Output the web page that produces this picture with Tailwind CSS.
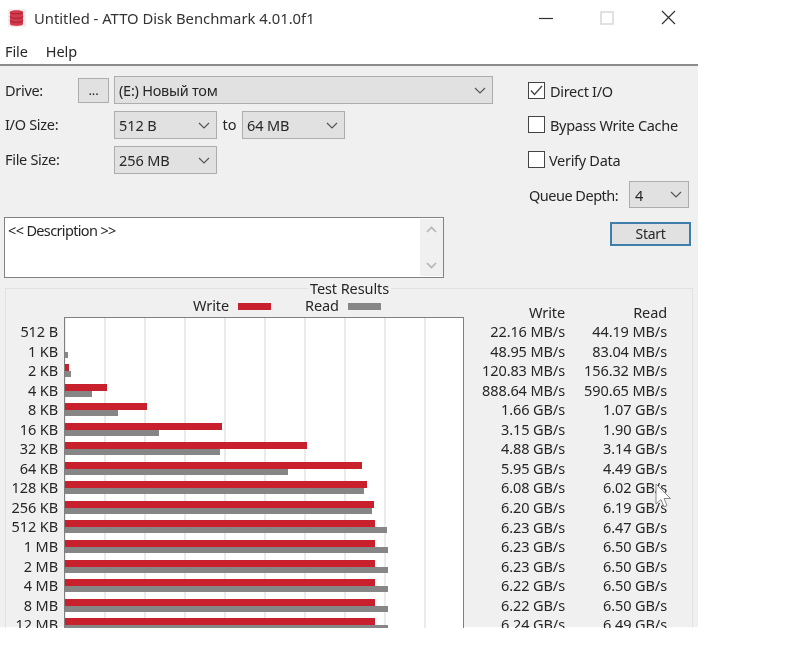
<!DOCTYPE html>
<html lang="en">
<head>
<meta charset="UTF-8">
<title>Untitled - ATTO Disk Benchmark 4.01.0f1</title>
<script src="https://cdn.jsdelivr.net/npm/@tailwindcss/browser@4"></script>
</head>
<body class="bg-white">
<div class="relative w-[698px] h-[628px] overflow-hidden bg-white text-[14.5px] leading-[20px] tracking-[-0.1px] text-[#262626] font-['Noto_Sans','Liberation_Sans',sans-serif] blur-[0.4px]">

  <!-- title bar -->
  <div class="flex items-center h-[35px] pl-[8px]">
    <svg width="18" height="18" viewBox="0 0 18 18"><rect width="18" height="18" fill="#f3eded"/><path d="M2 3C2 0.5 15 0.5 15 3V15C15 17.5 2 17.5 2 15Z" fill="#d8384c"/><path d="M2 3C2 5.5 15 5.5 15 3M2 7.5C2 10 15 10 15 7.5M2 11.5C2 14 15 14 15 11.5" fill="none" stroke="#94293a" stroke-width="1"/></svg>
    <span class="ml-[8px] text-[14.8px] tracking-normal text-[#333]">Untitled - ATTO Disk Benchmark 4.01.0f1</span>
    <div class="ml-auto flex items-center">
      <svg width="14" height="14" viewBox="0 0 14 14" class="mr-[47px]"><path d="M0 7.5H14" stroke="#333" stroke-width="1.2"/></svg>
      <svg width="14" height="14" viewBox="0 0 14 14" class="mr-[47px]"><rect x="1" y="1" width="12" height="12" fill="none" stroke="#d8d8d8" stroke-width="1.5"/></svg>
      <svg width="15" height="15" viewBox="0 0 15 15" class="mr-[22px]"><path d="M1 1L14 14M14 1L1 14" stroke="#333" stroke-width="1.2"/></svg>
    </div>
  </div>

  <!-- menu -->
  <div class="flex items-center gap-[18px] h-[31px] pl-[5px] pt-[2px] border-b-2 border-[#8c8c8c] box-border">
    <span>File</span>
    <span>Help</span>
  </div>

  <!-- panel -->
  <div class="bg-[#f0f0f0] h-[561px]">
    <div class="flex">
      <div class="w-[494px] pl-[4px] pt-[10px]">
        <div class="flex items-center h-[28px]">
          <span class="w-[74px] tracking-[-0.3px] pl-[1px] -mt-[1px]">Drive:</span>
          <div class="flex items-center justify-center w-[31px] h-[25px] bg-[#e1e1e1] border border-[#adadad] text-[13px] pb-[1px]">...</div>
          <div class="flex items-center justify-between ml-[5px] w-[379px] h-[28px] pl-[4px] pr-[6px] bg-[#e1e1e1] border border-[#adadad]">
            <span class="tracking-[-0.25px]">(E:) Новый том</span>
            <svg width="12" height="7" viewBox="0 0 12 7"><path d="M1 1L6 6L11 1" fill="none" stroke="#555" stroke-width="1.2"/></svg>
          </div>
        </div>
        <div class="flex items-center h-[28px] mt-[7px]">
          <span class="w-[110px] tracking-[-0.3px] pl-[1px] -mt-[2px]">I/O Size:</span>
          <div class="flex items-center justify-between w-[103px] h-[28px] pl-[4px] pr-[6px] bg-[#e1e1e1] border border-[#adadad]">
            <span>512 B</span>
            <svg width="12" height="7" viewBox="0 0 12 7"><path d="M1 1L6 6L11 1" fill="none" stroke="#555" stroke-width="1.2"/></svg>
          </div>
          <span class="w-[25px] text-center -mt-[2px]">to</span>
          <div class="flex items-center justify-between w-[103px] h-[28px] pl-[4px] pr-[6px] bg-[#e1e1e1] border border-[#adadad]">
            <span>64 MB</span>
            <svg width="12" height="7" viewBox="0 0 12 7"><path d="M1 1L6 6L11 1" fill="none" stroke="#555" stroke-width="1.2"/></svg>
          </div>
        </div>
        <div class="flex items-center h-[28px] mt-[7px]">
          <span class="w-[110px] tracking-[-0.3px] pl-[1px] -mt-[2px]">File Size:</span>
          <div class="flex items-center justify-between w-[103px] h-[28px] pl-[4px] pr-[6px] bg-[#e1e1e1] border border-[#adadad]">
            <span>256 MB</span>
            <svg width="12" height="7" viewBox="0 0 12 7"><path d="M1 1L6 6L11 1" fill="none" stroke="#555" stroke-width="1.2"/></svg>
          </div>
        </div>
        <div class="flex justify-between mt-[43px] w-[440px] h-[61px] bg-white border border-[#828282]">
          <span class="pl-[3px] pt-[2px] tracking-[-0.65px]">&lt;&lt; Description &gt;&gt;</span>
          <div class="flex flex-col items-center justify-between w-[23px] my-[1px] py-[7px] bg-[#f0f0f0]">
            <svg width="11" height="7" viewBox="0 0 11 7"><path d="M1 6L5.5 1.5L10 6" fill="none" stroke="#b5b5b5" stroke-width="1.6"/></svg>
            <svg width="11" height="7" viewBox="0 0 11 7"><path d="M1 1L5.5 5.5L10 1" fill="none" stroke="#b5b5b5" stroke-width="1.6"/></svg>
          </div>
        </div>
      </div>

      <div class="ml-[34px] pt-[16px] tracking-[-0.3px]">
        <label class="flex items-center gap-[5px] h-[17px]">
          <span class="flex items-center justify-center w-[17px] h-[17px] bg-white border border-[#444]"><svg width="13" height="11" viewBox="0 0 13 11"><path d="M1 5.5L4.5 9.5L12 1" fill="none" stroke="#444" stroke-width="1.3"/></svg></span>
          <span>Direct I/O</span>
        </label>
        <label class="flex items-center gap-[5px] h-[17px] mt-[17px]">
          <span class="w-[17px] h-[17px] bg-white border border-[#444]"></span>
          <span class="mt-[1px]">Bypass Write Cache</span>
        </label>
        <label class="flex items-center gap-[4px] h-[17px] mt-[18px]">
          <span class="w-[17px] h-[17px] bg-white border border-[#444]"></span>
          <span>Verify Data</span>
        </label>
        <div class="flex items-center justify-between w-[161px] mt-[13px]">
          <span class="pl-[1px] tracking-[-0.5px]">Queue Depth:</span>
          <div class="flex items-center justify-between w-[60px] h-[27px] pl-[5px] pr-[6px] bg-[#e1e1e1] border border-[#adadad]">
            <span>4</span>
            <svg width="12" height="7" viewBox="0 0 12 7"><path d="M1 1L6 6L11 1" fill="none" stroke="#555" stroke-width="1.2"/></svg>
          </div>
        </div>
        <div class="flex items-center justify-center ml-[82px] mt-[14px] w-[81px] h-[24px] bg-[#e1e1e1] border-2 border-[#3f7dab] text-[14px]">Start</div>
      </div>
    </div>

    <!-- test results -->
    <div class="relative ml-[5px] mt-[10px] w-[688px] h-[400px] border border-[#e2e2e2]">
      <span class="absolute left-[302px] -top-[10px] px-[2px] leading-[18px] bg-[#f0f0f0]">Test Results</span>

      <div class="flex items-center h-[28px] pt-[4px] leading-[16px]">
        <span class="ml-[187px] w-[45px]">Write</span>
        <span class="w-[33px] h-[7px] mt-[2px] bg-[#c8202c]"></span>
        <span class="ml-[34px] w-[43px]">Read</span>
        <span class="w-[33px] h-[7px] mt-[2px] bg-[#868686]"></span>
      </div>

      <div class="flex">
        <div class="w-[52px] pt-[4px] text-right">
          <div class="h-[19.55px]">512 B</div>
          <div class="h-[19.55px]">1 KB</div>
          <div class="h-[19.55px]">2 KB</div>
          <div class="h-[19.55px]">4 KB</div>
          <div class="h-[19.55px]">8 KB</div>
          <div class="h-[19.55px]">16 KB</div>
          <div class="h-[19.55px]">32 KB</div>
          <div class="h-[19.55px]">64 KB</div>
          <div class="h-[19.55px]">128 KB</div>
          <div class="h-[19.55px]">256 KB</div>
          <div class="h-[19.55px]">512 KB</div>
          <div class="h-[19.55px]">1 MB</div>
          <div class="h-[19.55px]">2 MB</div>
          <div class="h-[19.55px]">4 MB</div>
          <div class="h-[19.55px]">8 MB</div>
          <div class="h-[19.55px]">12 MB</div>
        </div>

        <div class="ml-[6px] w-[400px] h-[340px] pt-[4px] bg-white border border-[#808080] bg-[linear-gradient(to_right,#ebebeb_2px,transparent_2px)] bg-[length:40px_100%] bg-[position:39px_0]">
          <div class="h-[19.55px] py-[3px]"></div>
          <div class="h-[19.55px] py-[3px]"><div class="h-[7px]"></div><div class="w-[3px] h-[6px] bg-[#868686]"></div></div>
          <div class="h-[19.55px] py-[3px]"><div class="w-[4px] h-[7px] bg-[#c8202c]"></div><div class="w-[6px] h-[6px] bg-[#868686]"></div></div>
          <div class="h-[19.55px] py-[3px]"><div class="w-[42px] h-[7px] bg-[#c8202c]"></div><div class="w-[27px] h-[6px] bg-[#868686]"></div></div>
          <div class="h-[19.55px] py-[3px]"><div class="w-[82px] h-[7px] bg-[#c8202c]"></div><div class="w-[53px] h-[6px] bg-[#868686]"></div></div>
          <div class="h-[19.55px] py-[3px]"><div class="w-[157px] h-[7px] bg-[#c8202c]"></div><div class="w-[94px] h-[6px] bg-[#868686]"></div></div>
          <div class="h-[19.55px] py-[3px]"><div class="w-[242px] h-[7px] bg-[#c8202c]"></div><div class="w-[155px] h-[6px] bg-[#868686]"></div></div>
          <div class="h-[19.55px] py-[3px]"><div class="w-[297px] h-[7px] bg-[#c8202c]"></div><div class="w-[223px] h-[6px] bg-[#868686]"></div></div>
          <div class="h-[19.55px] py-[3px]"><div class="w-[302px] h-[7px] bg-[#c8202c]"></div><div class="w-[299px] h-[6px] bg-[#868686]"></div></div>
          <div class="h-[19.55px] py-[3px]"><div class="w-[309px] h-[7px] bg-[#c8202c]"></div><div class="w-[307px] h-[6px] bg-[#868686]"></div></div>
          <div class="h-[19.55px] py-[3px]"><div class="w-[310px] h-[7px] bg-[#c8202c]"></div><div class="w-[322px] h-[6px] bg-[#868686]"></div></div>
          <div class="h-[19.55px] py-[3px]"><div class="w-[310px] h-[7px] bg-[#c8202c]"></div><div class="w-[323px] h-[6px] bg-[#868686]"></div></div>
          <div class="h-[19.55px] py-[3px]"><div class="w-[310px] h-[7px] bg-[#c8202c]"></div><div class="w-[323px] h-[6px] bg-[#868686]"></div></div>
          <div class="h-[19.55px] py-[3px]"><div class="w-[310px] h-[7px] bg-[#c8202c]"></div><div class="w-[323px] h-[6px] bg-[#868686]"></div></div>
          <div class="h-[19.55px] py-[3px]"><div class="w-[310px] h-[7px] bg-[#c8202c]"></div><div class="w-[323px] h-[6px] bg-[#868686]"></div></div>
          <div class="h-[19.55px] py-[3px]"><div class="w-[310px] h-[7px] bg-[#c8202c]"></div><div class="w-[323px] h-[6px] bg-[#868686]"></div></div>
        </div>

        <div class="w-[101px] -mt-[15.5px] text-right">
          <div class="h-[19.55px]">Write</div>
          <div class="h-[19.55px]">22.16 MB/s</div>
          <div class="h-[19.55px]">48.95 MB/s</div>
          <div class="h-[19.55px]">120.83 MB/s</div>
          <div class="h-[19.55px]">888.64 MB/s</div>
          <div class="h-[19.55px]">1.66 GB/s</div>
          <div class="h-[19.55px]">3.15 GB/s</div>
          <div class="h-[19.55px]">4.88 GB/s</div>
          <div class="h-[19.55px]">5.95 GB/s</div>
          <div class="h-[19.55px]">6.08 GB/s</div>
          <div class="h-[19.55px]">6.20 GB/s</div>
          <div class="h-[19.55px]">6.23 GB/s</div>
          <div class="h-[19.55px]">6.23 GB/s</div>
          <div class="h-[19.55px]">6.23 GB/s</div>
          <div class="h-[19.55px]">6.22 GB/s</div>
          <div class="h-[19.55px]">6.22 GB/s</div>
          <div class="h-[19.55px]">6.24 GB/s</div>
        </div>
        <div class="w-[102px] -mt-[15.5px] text-right">
          <div class="h-[19.55px]">Read</div>
          <div class="h-[19.55px]">44.19 MB/s</div>
          <div class="h-[19.55px]">83.04 MB/s</div>
          <div class="h-[19.55px]">156.32 MB/s</div>
          <div class="h-[19.55px]">590.65 MB/s</div>
          <div class="h-[19.55px]">1.07 GB/s</div>
          <div class="h-[19.55px]">1.90 GB/s</div>
          <div class="h-[19.55px]">3.14 GB/s</div>
          <div class="h-[19.55px]">4.49 GB/s</div>
          <div class="h-[19.55px]">6.02 GB/s</div>
          <div class="h-[19.55px]">6.19 GB/s</div>
          <div class="h-[19.55px]">6.47 GB/s</div>
          <div class="h-[19.55px]">6.50 GB/s</div>
          <div class="h-[19.55px]">6.50 GB/s</div>
          <div class="h-[19.55px]">6.50 GB/s</div>
          <div class="h-[19.55px]">6.50 GB/s</div>
          <div class="h-[19.55px]">6.49 GB/s</div>
        </div>
      </div>
    </div>
  </div>

  <!-- mouse pointer -->
  <svg class="absolute left-[655px] top-[483px]" width="17" height="26" viewBox="0 0 17 26"><path d="M1 1V21L6 16.5L9 24L12 22.5L9 15.5H15.5Z" fill="#ffffff" fill-opacity="0.9" stroke="#8a8a8a" stroke-width="1"/></svg>
</div>
</body>
</html>
